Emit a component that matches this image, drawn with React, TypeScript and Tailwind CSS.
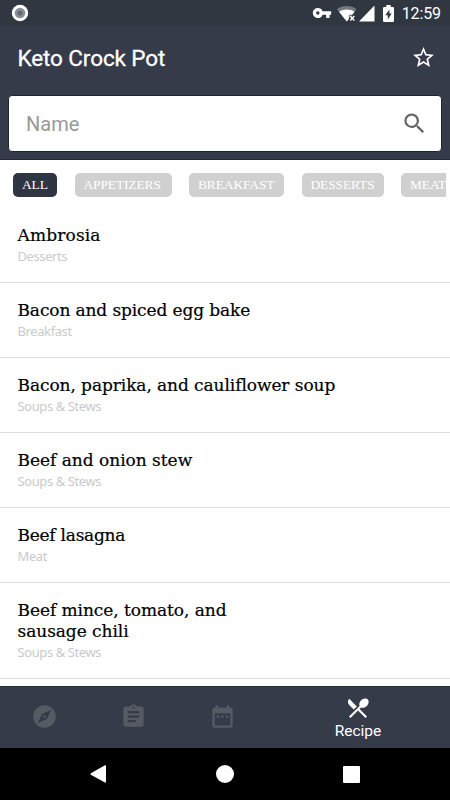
import React from 'react'
import clsx from 'clsx'
import {
  MdAssignment,
  MdDateRange,
  MdExplore,
  MdRestaurantMenu,
  MdSearch,
  MdStarBorder,
  MdVpnKey,
} from 'react-icons/md'

const categories = [
  { label: 'All', width: 'w-11', active: true },
  { label: 'Appetizers', width: 'w-[97px]' },
  { label: 'Breakfast', width: 'w-[95px]' },
  { label: 'Desserts', width: 'w-[82px]' },
  { label: 'Meat', width: 'w-[56px]' },
]

const recipes = [
  { title: 'Ambrosia', category: 'Desserts', tracking: 'tracking-[0.15px]' },
  { title: 'Bacon and spiced egg bake', category: 'Breakfast', tracking: 'tracking-[-0.12px]' },
  { title: 'Bacon, paprika, and cauliflower soup', category: 'Soups & Stews', tracking: 'tracking-[-0.08px]' },
  { title: 'Beef and onion stew', category: 'Soups & Stews', tracking: 'tracking-[-0.02px]' },
  { title: 'Beef lasagna', category: 'Meat', tracking: 'tracking-[-0.25px]' },
  { title: 'Beef mince, tomato, and\nsausage chili', category: 'Soups & Stews', tracking: 'tracking-[-0.06px]' },
]

const StatusBar: React.FC = () => (
  <div className="h-[26px] shrink-0 bg-[#303740] flex items-center justify-between pl-[11px] pr-[9px] text-white">
    <svg width="18" height="18" viewBox="0 0 18 18">
      <circle cx="9" cy="9" r="8.2" fill="#fff" />
      <circle cx="9" cy="9" r="5.3" fill="#8b9097" />
      <circle cx="9" cy="9" r="2.6" fill="#656b74" />
    </svg>
    <div className="flex items-center">
      <MdVpnKey size={20} className="mr-[5px]" />
      <svg width="20" height="17" viewBox="0 0 20 17" className="mr-[2px]">
        <path d="M0 4.2C5.5-.2 14-.2 19.5 4.2L9.8 16.5Z" fill="#747980" />
        <path d="M2 6.8C7 3.6 12.7 3.6 17.6 6.8L15.2 9.8H11.8V14L9.8 16.5Z" fill="#fff" />
        <path d="M13.3 11l4 4.4m0-4.4l-4 4.4" stroke="#fff" strokeWidth="1.5" />
      </svg>
      <svg width="16" height="17" viewBox="0 0 16 17" className="mr-[8px]">
        <path d="M0 16.5L15.5 .5V16.5Z" fill="#fff" />
      </svg>
      <svg width="11" height="17" viewBox="0 0 11 17" className="mr-[8px]">
        <path
          d="M3.3 0H7.7V2H9.8Q11 2 11 3.2V15.8Q11 17 9.8 17H1.2Q0 17 0 15.8V3.2Q0 2 1.2 2H3.3ZM6.4 4.5L2.3 10.2H4.8V14.4L8.7 8.6H6.4Z"
          fill="#fff"
          fillRule="evenodd"
        />
      </svg>
      <span className="text-[16px] leading-none tracking-[-0.1px] pt-px">12:59</span>
    </div>
  </div>
)

const App: React.FC = () => {
  return (
    <div className="w-[450px] h-[800px] flex flex-col overflow-hidden bg-white font-['Roboto',sans-serif]">
      <StatusBar />

      {/* Header */}
      <header className="h-[134px] shrink-0 bg-[#363b49] border-b border-[#1c2940]">
        <div className="h-[69px] flex items-center justify-between pl-[17.5px] pr-[14px] pb-[6px] text-white">
          <h1 className="pt-px text-[22.5px] leading-none font-normal tracking-[-0.1px] [-webkit-text-stroke:0.3px_white]">
            Keto Crock Pot
          </h1>
          <MdStarBorder size={25} className="mb-px" />
        </div>
        <div className="mx-2 h-[57px] rounded-[4px] bg-white border border-[#20242e] flex items-center justify-between pl-[17px] pr-[13px]">
          <span className="text-[20px] text-[#999] pt-px">Name</span>
          <MdSearch size={27} className="text-[#666]" />
        </div>
      </header>

      {/* Category filter */}
      <div className="h-[48px] shrink-0 ml-[13px] mr-[4px] pt-[13px] flex gap-[17.5px] overflow-hidden">
        {categories.map((c) => (
          <span
            key={c.label}
            className={clsx(
              "h-[24px] shrink-0 rounded-[5px] flex items-center pl-[9px] text-[13.5px] tracking-[-0.15px] uppercase text-white font-['Liberation_Serif',serif]",
              c.width,
              c.active ? 'bg-[#303543]' : 'bg-[#d0d0d0]',
            )}
          >
            {c.label}
          </span>
        ))}
      </div>

      {/* Recipes */}
      <ul className="flex-1 overflow-hidden">
        {recipes.map((r) => (
          <li key={r.title} className="border-b border-[#dcdcdc] pl-[17.5px] pt-[17px] pb-[16px]">
            <h2
              className={clsx(
                "text-[17px] leading-[21px] whitespace-pre-line text-black [-webkit-text-stroke:0.2px_black] font-['DejaVu_Serif',serif]",
                r.tracking,
              )}
            >
              {r.title}
            </h2>
            <p className="pt-px text-[13px] leading-[19px] tracking-[-0.4px] text-[#cacaca] font-['Noto_Sans',sans-serif]">
              {r.category}
            </p>
          </li>
        ))}
      </ul>

      {/* Tab bar */}
      <nav className="h-[62px] shrink-0 bg-[#363b49] border-t border-[#282d3a] flex items-center text-[#565b63]">
        <div className="w-[89px] pb-[2px] flex justify-center">
          <MdExplore size={27} />
        </div>
        <div className="w-[89px] pb-[2px] flex justify-center">
          <MdAssignment size={27} />
        </div>
        <div className="w-[88px] pb-[2px] flex justify-center">
          <MdDateRange size={27} />
        </div>
        <div className="flex-1 pt-[2px] flex flex-col items-center text-white">
          <MdRestaurantMenu size={26} />
          <span className="text-[15.5px] leading-[21px]">Recipe</span>
        </div>
      </nav>

      {/* System navigation */}
      <div className="h-[52px] shrink-0 bg-black flex items-center justify-between px-[90px]">
        <svg width="16" height="18" viewBox="0 0 16 18">
          <path d="M.8 8.3L15 .3Q16 0 16 1V17Q16 18 15 17.6L.8 9.7Q0 9 .8 8.3Z" fill="#fff" />
        </svg>
        <span className="size-[18px] rounded-full bg-white" />
        <span className="size-[17px] rounded-[1px] bg-white" />
      </div>
    </div>
  )
}

export default App
